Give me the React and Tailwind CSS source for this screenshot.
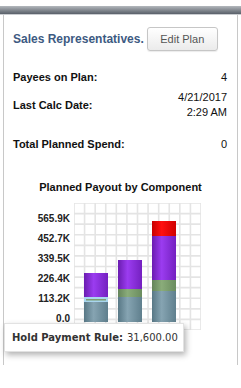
import React from 'react';

const GRID = 127;
const STEP = GRID / 12;

const bars = [
  { x: 10, segs: [
    { y: 70, h: 24, c: 'purple' },
    { y: 94, h: 5, c: 'hover' },
    { y: 99, h: 20, c: 'slate' },
  ] },
  { x: 44, segs: [
    { y: 57, h: 29, c: 'purple' },
    { y: 86, h: 8, c: 'green' },
    { y: 94, h: 25, c: 'slate' },
  ] },
  { x: 78, segs: [
    { y: 18, h: 15, c: 'red' },
    { y: 33, h: 44, c: 'purple' },
    { y: 77, h: 11, c: 'green' },
    { y: 88, h: 31, c: 'slate' },
  ] },
];

const grads = {
  purple: ['#6a1cb0', '#9b3cf0', '#7420c0'],
  red: ['#c80000', '#ff1010', '#d00000'],
  green: ['#64845a', '#8aac7a', '#6a8c5e'],
  slate: ['#587886', '#86a4b2', '#5f7f8d'],
};

const Chart = () => (
  <svg width={GRID} height={GRID} viewBox={`0 0 ${GRID} ${GRID}`}>
    <defs>
      {Object.entries(grads).map(([k, [a, b, c]]) => (
        <linearGradient key={k} id={`g-${k}`} x1="0" x2="1" y1="0" y2="0">
          <stop offset="0" stopColor={a} />
          <stop offset="0.4" stopColor={b} />
          <stop offset="1" stopColor={c} />
        </linearGradient>
      ))}
    </defs>
    {Array.from({ length: 13 }).map((_, i) => (
      <g key={i}>
        <line x1={i * STEP} x2={i * STEP} y1="0" y2={GRID} stroke="#e4e4e4" strokeWidth="1.6" />
        <line y1={i * STEP} y2={i * STEP} x1="0" x2={GRID} stroke="#e4e4e4" strokeWidth="1.6" />
      </g>
    ))}
    {bars.map((b, i) => (
      <g key={i}>
        {b.segs.map((s, j) =>
          s.c === 'hover' ? (
            <g key={j}>
              <rect x={b.x} y={s.y} width="24" height={s.h} fill="#a9d6ef" />
              <rect x={b.x + 2} y={s.y + 2} width="20" height="1.5" fill="#7d9c70" />
            </g>
          ) : (
            <rect key={j} x={b.x} y={s.y} width="24" height={s.h} fill={`url(#g-${s.c})`} />
          )
        )}
      </g>
    ))}
  </svg>
);

export default function App() {
  return (
    <div className="w-[241px] h-[388px] bg-white overflow-hidden" style={{ fontFamily: '"Liberation Sans", Arial, sans-serif' }}>
      <div className="h-[6px]" />
      <div className="h-[8px] bg-gradient-to-b from-[#b4b8bd] to-[#596069]" />
      <div className="h-px bg-[#c9ccd0]" />
      <div className="relative mx-[3px] h-[350px] border-x border-[#c8c8c8] px-[9px]">
        <div className="flex items-center gap-[3px] pt-[12px]">
          <div className="text-[12px] font-bold text-[#3d5a82] leading-[14px]">Sales Representatives.</div>
          <button className="w-[71px] h-[24px] rounded-[3px] border border-[#c6c6c6] bg-gradient-to-b from-white to-[#ebebeb] text-[11px] text-[#555] shadow-[0_1px_1px_rgba(0,0,0,0.08)]">
            Edit Plan
          </button>
        </div>

        <div className="text-[11px] text-[#111]">
          <div className="mt-[20px] flex justify-between leading-[13px]">
            <span className="font-bold">Payees on Plan:</span>
            <span className="pr-px text-[#111]">4</span>
          </div>
          <div className="mt-[6px] flex items-center justify-between">
            <span className="font-bold leading-[13px]">Last Calc Date:</span>
            <div className="text-right leading-[15px] pr-px text-[#111]">
              <div>4/21/2017</div>
              <div>2:29 AM</div>
            </div>
          </div>
          <div className="mt-[18px] flex justify-between leading-[13px]">
            <span className="font-bold">Total Planned Spend:</span>
            <span className="pr-px text-[#111]">0</span>
          </div>
        </div>

        <div className="mt-[30px] text-center text-[11px] font-bold leading-[13px] text-[#111]">
          Planned Payout by Component
        </div>

        <div className="mt-[9px] flex gap-[4px]">
          <div className="w-[57px] pt-[6px] text-right text-[10px] font-bold leading-[20px] text-[#222]">
            <div>565.9K</div>
            <div>452.7K</div>
            <div>339.5K</div>
            <div>226.4K</div>
            <div>113.2K</div>
            <div>0.0</div>
          </div>
          <Chart />
        </div>

        <div
          className="absolute left-0 top-[308px] w-[180px] h-[29px] flex items-center pl-[7px] bg-white border border-[#e2e2e2] shadow-[2px_3px_6px_rgba(0,0,0,0.3)] text-[10px] text-[#333]"
          style={{ fontFamily: '"DejaVu Sans", Verdana, sans-serif' }}
        >
          <span className="font-bold">Hold Payment Rule:</span>
          <span className="ml-[4px]">31,600.00</span>
        </div>
      </div>
    </div>
  );
}
